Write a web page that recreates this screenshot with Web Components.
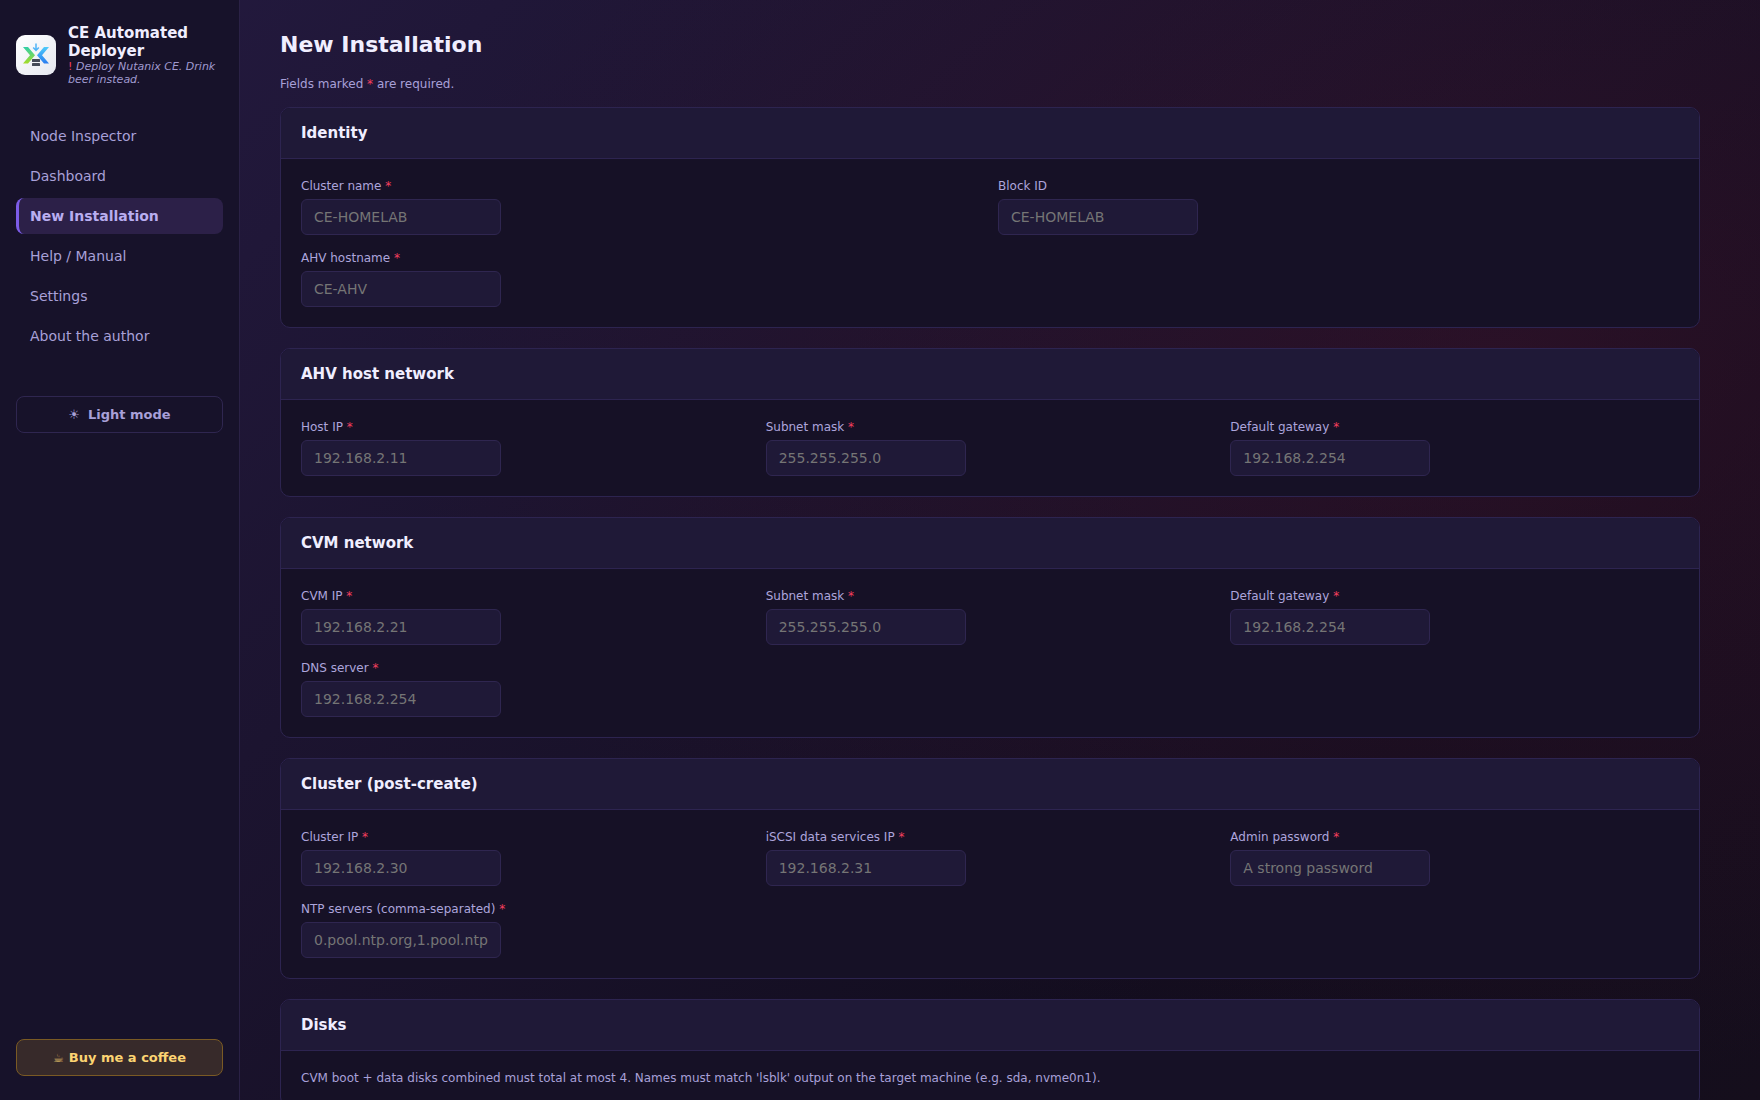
<!DOCTYPE html>
<html lang="en">
<head>
<meta charset="utf-8">
<title>CE Automated Deployer</title>
<style>
  html, body { margin: 0; height: 100%; overflow: hidden; }
  body {
    font-family: "DejaVu Sans", sans-serif;
    background-color: #120d1e;
  }
</style>
</head>
<body>
<ce-app>
  <ce-sidebar slot="side"></ce-sidebar>
  <h1 slot="title">New Installation</h1>
  <form-card heading="Identity" columns="2">
    <form-field label="Cluster name" required placeholder="CE-HOMELAB"></form-field>
    <form-field label="Block ID" placeholder="CE-HOMELAB"></form-field>
    <form-field label="AHV hostname" required placeholder="CE-AHV"></form-field>
  </form-card>
  <form-card heading="AHV host network">
    <form-field label="Host IP" required placeholder="192.168.2.11"></form-field>
    <form-field label="Subnet mask" required placeholder="255.255.255.0"></form-field>
    <form-field label="Default gateway" required placeholder="192.168.2.254"></form-field>
  </form-card>
  <form-card heading="CVM network">
    <form-field label="CVM IP" required placeholder="192.168.2.21"></form-field>
    <form-field label="Subnet mask" required placeholder="255.255.255.0"></form-field>
    <form-field label="Default gateway" required placeholder="192.168.2.254"></form-field>
    <form-field label="DNS server" required placeholder="192.168.2.254"></form-field>
  </form-card>
  <form-card heading="Cluster (post-create)">
    <form-field label="Cluster IP" required placeholder="192.168.2.30"></form-field>
    <form-field label="iSCSI data services IP" required placeholder="192.168.2.31"></form-field>
    <form-field label="Admin password" required placeholder="A strong password"></form-field>
    <form-field label="NTP servers (comma-separated)" required placeholder="0.pool.ntp.org,1.pool.ntp.org"></form-field>
  </form-card>
  <form-card heading="Disks" note="CVM boot + data disks combined must total at most 4. Names must match 'lsblk' output on the target machine (e.g. sda, nvme0n1)."></form-card>
</ce-app>

<script>
const appTemplate = document.createElement('template');
appTemplate.innerHTML = `
  <style>
    :host {
      display: flex;
      height: 100vh;
      overflow: hidden;
      background:
        radial-gradient(ellipse 1100px 720px at 85% 33%, rgba(80, 20, 46, 0.36), transparent 100%),
        linear-gradient(135deg, #241a40 0%, #1c1430 35%, #120d1e 75%, #150e1c 100%);
    }
    main {
      flex: 1;
      min-width: 0;
      padding: 28px 60px 0 40px;
      overflow: hidden;
    }
    ::slotted(h1) {
      margin: 0 0 14px;
      font-size: 22px;
      line-height: 33px;
      font-weight: 700;
      color: #f0eeff;
    }
    p {
      margin: 0 0 14px;
      font-size: 12px;
      line-height: 18px;
      color: #a8a0d8;
    }
    p span { color: #f43f5e; }
    .cards { display: flex; flex-direction: column; gap: 20px; }
  </style>
  <slot name="side"></slot>
  <main>
    <slot name="title"></slot>
    <p>Fields marked <span>*</span> are required.</p>
    <div class="cards"><slot></slot></div>
  </main>
`;

class CeApp extends HTMLElement {
  constructor() {
    super();
    this.attachShadow({ mode: 'open' });
    this.shadowRoot.appendChild(appTemplate.content.cloneNode(true));
  }
}

const sidebarTemplate = document.createElement('template');
sidebarTemplate.innerHTML = `
  <style>
    :host {
      display: flex;
      flex-direction: column;
      flex: none;
      box-sizing: border-box;
      width: 240px;
      height: 100vh;
      padding: 24px 16px 24px;
      background: #17122a;
      border-right: 1px solid #2a2145;
    }
    .brand { display: flex; align-items: center; gap: 12px; margin-bottom: 32px; }
    .brand svg { flex: none; width: 40px; height: 40px; }
    .name { font-size: 15px; line-height: 18px; font-weight: 700; color: #f0eeff; }
    .tag { font-size: 11px; line-height: 13px; font-style: italic; color: #a09ad0; }
    .tag b { color: #f43f5e; font-weight: 400; font-style: normal; }
    nav { display: flex; flex-direction: column; gap: 4px; }
    .theme, .coffee {
      box-sizing: border-box;
      display: flex;
      align-items: center;
      justify-content: center;
      height: 37px;
      font-size: 13px;
      font-weight: 700;
      border-radius: 8px;
    }
    .theme {
      margin-top: 42px;
      gap: 8px;
      color: #a8a0d8;
      border: 1px solid #2f2650;
    }
    .theme i { font-style: normal; font-size: 13px; font-weight: 400; }
    .coffee {
      margin-top: auto;
      gap: 5px;
      color: #fcd472;
      background: #372a2a;
      border: 1px solid #7a5a24;
    }
    .coffee i { font-style: normal; font-size: 12px; font-weight: 400; opacity: .75; }
  </style>
  <div class="brand">
    <svg viewBox="0 0 40 40" aria-hidden="true">
      <defs>
        <linearGradient id="tile" x1="0" y1="0" x2="1" y2="1">
          <stop offset="0" stop-color="#ffffff"/><stop offset="1" stop-color="#e6e8f0"/>
        </linearGradient>
        <linearGradient id="lime" x1="0" y1="0" x2="0" y2="1">
          <stop offset="0" stop-color="#2fcfa8"/><stop offset="1" stop-color="#a6dc28"/>
        </linearGradient>
        <linearGradient id="sky" x1="0" y1="0" x2="0" y2="1">
          <stop offset="0" stop-color="#4fcbfa"/><stop offset="1" stop-color="#2a7cf0"/>
        </linearGradient>
      </defs>
      <rect width="40" height="40" rx="9" fill="url(#tile)"/>
      <path d="M7 12h5l7 8.2-7 8.3H7l7-8.3z" fill="url(#lime)"/>
      <path d="M33 12h-5l-7 8.2 7 8.3h5l-7-8.3z" fill="url(#sky)"/>
      <path d="M20 8.5v6.5M17.2 12.4l2.8 3 2.8-3" fill="none" stroke="#4fb4f7" stroke-width="1.5"/>
      <rect x="16" y="24" width="8" height="3" rx=".6" fill="#444957"/>
      <rect x="16" y="28" width="8" height="3" rx=".6" fill="#444957"/>
    </svg>
    <div>
      <div class="name">CE Automated Deployer</div>
      <div class="tag"><b>!</b> Deploy Nutanix CE. Drink beer instead.</div>
    </div>
  </div>
  <nav>
    <nav-item>Node Inspector</nav-item>
    <nav-item>Dashboard</nav-item>
    <nav-item active>New Installation</nav-item>
    <nav-item>Help / Manual</nav-item>
    <nav-item>Settings</nav-item>
    <nav-item>About the author</nav-item>
  </nav>
  <div class="theme"><i>☀</i> Light mode</div>
  <div class="coffee"><i>☕</i> Buy me a coffee</div>
`;

class CeSidebar extends HTMLElement {
  constructor() {
    super();
    this.attachShadow({ mode: 'open' });
    this.shadowRoot.appendChild(sidebarTemplate.content.cloneNode(true));
  }
}

const navItemTemplate = document.createElement('template');
navItemTemplate.innerHTML = `
  <style>
    :host {
      display: flex;
      align-items: center;
      box-sizing: border-box;
      height: 36px;
      padding-left: 11px;
      border-left: 3px solid transparent;
      border-radius: 8px;
      font-size: 14px;
      color: #a8a0d8;
    }
    :host([active]) {
      background: #2c2048;
      border-left-color: #7c5ce8;
      color: #b9aef0;
      font-weight: 700;
    }
  </style>
  <slot></slot>
`;

class NavItem extends HTMLElement {
  constructor() {
    super();
    this.attachShadow({ mode: 'open' });
    this.shadowRoot.appendChild(navItemTemplate.content.cloneNode(true));
  }
}

const cardTemplate = document.createElement('template');
cardTemplate.innerHTML = `
  <style>
    :host {
      display: block;
      background: #161126;
      border: 1px solid #2d2450;
      border-radius: 10px;
      overflow: hidden;
    }
    h2 {
      margin: 0;
      padding: 0 20px;
      height: 50px;
      line-height: 50px;
      font-size: 15px;
      font-weight: 700;
      color: #f0eeff;
      background: #1f1937;
      border-bottom: 1px solid #2d2450;
    }
    .body { padding: 20px; }
    .note {
      margin: -1px 0 0;
      font-size: 12px;
      line-height: 16px;
      color: #a8a0d8;
    }
    .grid {
      display: grid;
      grid-template-columns: repeat(var(--cols, 3), 1fr);
      gap: 16px;
    }
    .note:empty { display: none; }
  </style>
  <h2></h2>
  <div class="body">
    <p class="note"></p>
    <div class="grid"><slot></slot></div>
  </div>
`;

class FormCard extends HTMLElement {
  constructor() {
    super();
    this.attachShadow({ mode: 'open' });
    this.shadowRoot.appendChild(cardTemplate.content.cloneNode(true));
  }

  connectedCallback() {
    this.shadowRoot.querySelector('h2').textContent = this.getAttribute('heading');
    this.shadowRoot.querySelector('.note').textContent = this.getAttribute('note') || '';
    this.style.setProperty('--cols', this.getAttribute('columns') || 3);
  }
}

const fieldTemplate = document.createElement('template');
fieldTemplate.innerHTML = `
  <style>
    :host { display: block; }
    label {
      display: block;
      margin-bottom: 6px;
      font-size: 12px;
      line-height: 14px;
      color: #ada5dc;
    }
    label span { color: #f43f5e; }
    input {
      display: block;
      box-sizing: border-box;
      width: 200px;
      height: 36px;
      padding: 0 12px;
      font: 14px "DejaVu Sans", sans-serif;
      color: #f0eeff;
      background: #1f1937;
      border: 1px solid #2f2650;
      border-radius: 6px;
      outline: none;
    }
    input::placeholder { color: #757575; opacity: 1; }
  </style>
  <label></label>
  <input type="text">
`;

class FormField extends HTMLElement {
  constructor() {
    super();
    this.attachShadow({ mode: 'open' });
    this.shadowRoot.appendChild(fieldTemplate.content.cloneNode(true));
  }

  connectedCallback() {
    const label = this.shadowRoot.querySelector('label');
    label.textContent = this.getAttribute('label');
    if (this.hasAttribute('required')) {
      const star = document.createElement('span');
      star.textContent = '*';
      label.append(' ', star);
    }
    this.shadowRoot.querySelector('input').placeholder = this.getAttribute('placeholder') || '';
  }
}

customElements.define('ce-app', CeApp);
customElements.define('ce-sidebar', CeSidebar);
customElements.define('nav-item', NavItem);
customElements.define('form-card', FormCard);
customElements.define('form-field', FormField);
</script>
</body>
</html>
